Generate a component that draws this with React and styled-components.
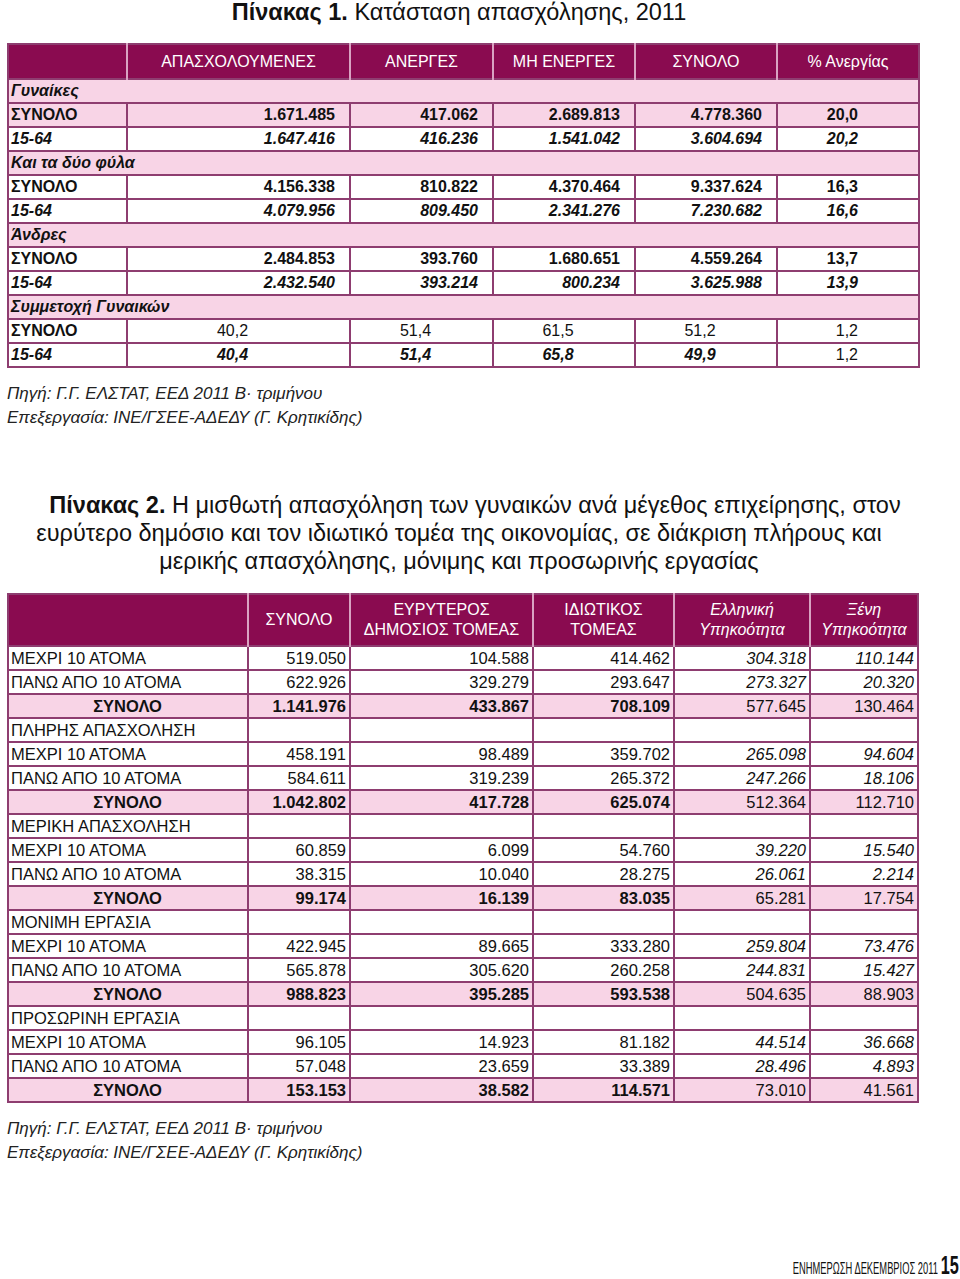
import React from 'react';
import styled, { createGlobalStyle } from 'styled-components';

const GlobalStyle = createGlobalStyle`
  body {
    margin: 0;
    background: #ffffff;
    font-family: "Liberation Sans", Arial, sans-serif;
    color: #111;
  }
`;

const MAGENTA = '#8a0b50';
const PINK = '#f8d4e6';
const LINE = '#8e3d70';

// Page shell
const Page = styled.div`
  width: 911px;
  height: 1279px;
  padding-left: 7px;
  display: flex;
  flex-direction: column;
  box-sizing: border-box;
`;

const Title1 = styled.h1`
  margin: 0 0 19px;
  font-size: 23.5px;
  line-height: 24px;
  font-weight: 400;
  text-align: center;
  color: #111;

  b {
    font-weight: 700;
  }
`;

const Title2 = styled.h2`
  margin: 61px 0 18px;
  font-size: 23.5px;
  line-height: 28px;
  font-weight: 400;
  text-align: center;
  text-indent: 32px;
  color: #111;

  b {
    font-weight: 700;
  }
`;

const Source = styled.div`
  margin-top: 14px;
  font-size: 17px;
  line-height: 24px;
  font-style: italic;
  color: #222;
`;

const Table = styled.table`
  width: ${p => p.$width}px;
  border-collapse: collapse;
  table-layout: fixed;
  border: 2px solid ${LINE};
`;

const HeadCell = styled.th`
  background: ${MAGENTA};
  color: #fff;
  font-weight: 400;
  font-size: 16px;
  line-height: 20px;
  padding: 0 2px;
  height: ${p => p.$h}px;
  border-left: 2px solid #d9a3c2;
  font-style: ${p => (p.$italic ? 'italic' : 'normal')};

  &:first-child {
    border-left: none;
  }
`;

const Row = styled.tr`
  height: 24px;
  background: ${p => (p.$pink ? PINK : '#fff')};
`;

const Cell = styled.td`
  border: 2px solid ${LINE};
  padding: 0 ${p => p.$pr ?? 3}px 0 2px;
  font-size: ${p => p.$size || 16}px;
  line-height: 20px;
  white-space: nowrap;
  text-align: ${p => p.$align || 'left'};
  font-weight: ${p => (p.$bold ? 700 : 400)};
  font-style: ${p => (p.$italic ? 'italic' : 'normal')};
`;

const SectionCell = styled.td`
  border: 2px solid ${LINE};
  background: ${PINK};
  padding: 0 2px;
  font-size: 16px;
  line-height: 20px;
  font-weight: 700;
  font-style: italic;
`;

const Footer = styled.div`
  margin-top: auto;
  margin-right: -48px;
  display: flex;
  justify-content: flex-end;
  align-items: baseline;
  gap: 0;
  line-height: 20px;
`;

// condensed type, squeezed toward the right edge
const Narrow = styled.span`
  display: inline-block;
  font-size: ${p => p.$size}px;
  font-weight: ${p => (p.$bold ? 700 : 400)};
  transform: scaleX(${p => p.$sx});
  transform-origin: right center;
  margin-right: ${p => p.$mr || 0}px;
  color: #111;
`;

// Table 1 data
const t1Cols = [119, 223, 143, 142, 142, 142];
const t1Head = ['', 'ΑΠΑΣΧΟΛΟΥΜΕΝΕΣ', 'ΑΝΕΡΓΕΣ', 'ΜΗ ΕΝΕΡΓΕΣ', 'ΣΥΝΟΛΟ', '% Ανεργίας'];

const t1Rows = [
  { section: 'Γυναίκες' },
  { label: 'ΣΥΝΟΛΟ', pink: true, vals: ['1.671.485', '417.062', '2.689.813', '4.778.360', '20,0'] },
  { label: '15-64', italic: true, vals: ['1.647.416', '416.236', '1.541.042', '3.604.694', '20,2'] },
  { section: 'Και τα δύο φύλα' },
  { label: 'ΣΥΝΟΛΟ', vals: ['4.156.338', '810.822', '4.370.464', '9.337.624', '16,3'] },
  { label: '15-64', italic: true, vals: ['4.079.956', '809.450', '2.341.276', '7.230.682', '16,6'] },
  { section: 'Άνδρες' },
  { label: 'ΣΥΝΟΛΟ', vals: ['2.484.853', '393.760', '1.680.651', '4.559.264', '13,7'] },
  { label: '15-64', italic: true, vals: ['2.432.540', '393.214', '800.234', '3.625.988', '13,9'] },
  { section: 'Συμμετοχή Γυναικών' },
  { label: 'ΣΥΝΟΛΟ', share: true, plain: true, vals: ['40,2', '51,4', '61,5', '51,2', '1,2'] },
  { label: '15-64', share: true, italic: true, vals: ['40,4', '51,4', '65,8', '49,9', '1,2'] },
];

// Table 2 data
const t2Cols = [240, 102, 183, 141, 136, 108];
const t2Head = [
  '',
  'ΣΥΝΟΛΟ',
  ['ΕΥΡΥΤΕΡΟΣ', 'ΔΗΜΟΣΙΟΣ ΤΟΜΕΑΣ'],
  ['ΙΔΙΩΤΙΚΟΣ', 'ΤΟΜΕΑΣ'],
  ['Ελληνική', 'Υπηκοότητα'],
  ['Ξένη', 'Υπηκοότητα'],
];

const group = (a, b, c) => [
  { label: 'ΜΕΧΡΙ 10 ΑΤΟΜΑ', vals: a },
  { label: 'ΠΑΝΩ ΑΠΟ 10 ΑΤΟΜΑ', vals: b },
  { label: 'ΣΥΝΟΛΟ', total: true, vals: c },
];

const t2Rows = [
  ...group(
    ['519.050', '104.588', '414.462', '304.318', '110.144'],
    ['622.926', '329.279', '293.647', '273.327', '20.320'],
    ['1.141.976', '433.867', '708.109', '577.645', '130.464']
  ),
  { heading: 'ΠΛΗΡΗΣ ΑΠΑΣΧΟΛΗΣΗ' },
  ...group(
    ['458.191', '98.489', '359.702', '265.098', '94.604'],
    ['584.611', '319.239', '265.372', '247.266', '18.106'],
    ['1.042.802', '417.728', '625.074', '512.364', '112.710']
  ),
  { heading: 'ΜΕΡΙΚΗ ΑΠΑΣΧΟΛΗΣΗ' },
  ...group(
    ['60.859', '6.099', '54.760', '39.220', '15.540'],
    ['38.315', '10.040', '28.275', '26.061', '2.214'],
    ['99.174', '16.139', '83.035', '65.281', '17.754']
  ),
  { heading: 'ΜΟΝΙΜΗ ΕΡΓΑΣΙΑ' },
  ...group(
    ['422.945', '89.665', '333.280', '259.804', '73.476'],
    ['565.878', '305.620', '260.258', '244.831', '15.427'],
    ['988.823', '395.285', '593.538', '504.635', '88.903']
  ),
  { heading: 'ΠΡΟΣΩΡΙΝΗ ΕΡΓΑΣΙΑ' },
  ...group(
    ['96.105', '14.923', '81.182', '44.514', '36.668'],
    ['57.048', '23.659', '33.389', '28.496', '4.893'],
    ['153.153', '38.582', '114.571', '73.010', '41.561']
  ),
];

function Table1() {
  return (
    <Table $width={911}>
      <colgroup>
        {t1Cols.map((w, i) => (
          <col key={i} style={{ width: w }} />
        ))}
      </colgroup>
      <thead>
        <tr>
          {t1Head.map((h, i) => (
            <HeadCell key={i} $h={33}>
              {h}
            </HeadCell>
          ))}
        </tr>
      </thead>
      <tbody>
        {t1Rows.map((r, i) =>
          r.section ? (
            <Row key={i}>
              <SectionCell colSpan={6}>{r.section}</SectionCell>
            </Row>
          ) : (
            <Row key={i} $pink={r.pink}>
              <Cell $bold $italic={r.italic}>
                {r.label}
              </Cell>
              {r.vals.map((v, j) => {
                const last = j === 4;
                const plain = r.plain || (r.share && last);
                return (
                  <Cell
                    key={j}
                    $align={r.share && !last ? 'center' : 'right'}
                    $pr={last ? 60 : 14}
                    $bold={!plain}
                    $italic={r.italic && !plain}
                  >
                    {v}
                  </Cell>
                );
              })}
            </Row>
          )
        )}
      </tbody>
    </Table>
  );
}

function Table2() {
  return (
    <Table $width={910}>
      <colgroup>
        {t2Cols.map((w, i) => (
          <col key={i} style={{ width: w }} />
        ))}
      </colgroup>
      <thead>
        <tr>
          {t2Head.map((h, i) => (
            <HeadCell key={i} $h={50} $italic={i >= 4}>
              {Array.isArray(h) ? (
                <>
                  {h[0]}
                  <br />
                  {h[1]}
                </>
              ) : (
                h
              )}
            </HeadCell>
          ))}
        </tr>
      </thead>
      <tbody>
        {t2Rows.map((r, i) =>
          r.heading ? (
            <Row key={i}>
              <Cell $size={16.5}>{r.heading}</Cell>
              {[0, 1, 2, 3, 4].map(j => (
                <Cell key={j} />
              ))}
            </Row>
          ) : (
            <Row key={i} $pink={r.total}>
              <Cell $size={16.5} $bold={r.total} $align={r.total ? 'center' : 'left'}>
                {r.label}
              </Cell>
              {r.vals.map((v, j) => (
                <Cell
                  key={j}
                  $size={16.5}
                  $align="right"
                  $bold={r.total && j < 3}
                  $italic={!r.total && j >= 3}
                >
                  {v}
                </Cell>
              ))}
            </Row>
          )
        )}
      </tbody>
    </Table>
  );
}

export default function App() {
  return (
    <>
      <GlobalStyle />
      <Page>
        <Title1>
          <b>Πίνακας 1.</b> Κατάσταση απασχόλησης, 2011
        </Title1>
        <Table1 />
        <Source>
          Πηγή: Γ.Γ. ΕΛΣΤΑΤ, ΕΕΔ 2011 Β· τριμήνου
          <br />
          Επεξεργασία: ΙΝΕ/ΓΣΕΕ-ΑΔΕΔΥ (Γ. Κρητικίδης)
        </Source>
        <Title2>
          <b>Πίνακας 2.</b> Η μισθωτή απασχόληση των γυναικών ανά μέγεθος επιχείρησης, στον
          <br />
          ευρύτερο δημόσιο και τον ιδιωτικό τομέα της οικονομίας, σε διάκριση πλήρους και
          <br />
          μερικής απασχόλησης, μόνιμης και προσωρινής εργασίας
        </Title2>
        <Table2 />
        <Source>
          Πηγή: Γ.Γ. ΕΛΣΤΑΤ, ΕΕΔ 2011 Β· τριμήνου
          <br />
          Επεξεργασία: ΙΝΕ/ΓΣΕΕ-ΑΔΕΔΥ (Γ. Κρητικίδης)
        </Source>
        <Footer>
          <Narrow $size={17} $sx={0.55} $mr={-7}>
            ΕΝΗΜΕΡΩΣΗ ΔΕΚΕΜΒΡΙΟΣ 2011
          </Narrow>
          <Narrow $size={25} $sx={0.65} $bold>
            15
          </Narrow>
        </Footer>
      </Page>
    </>
  );
}
